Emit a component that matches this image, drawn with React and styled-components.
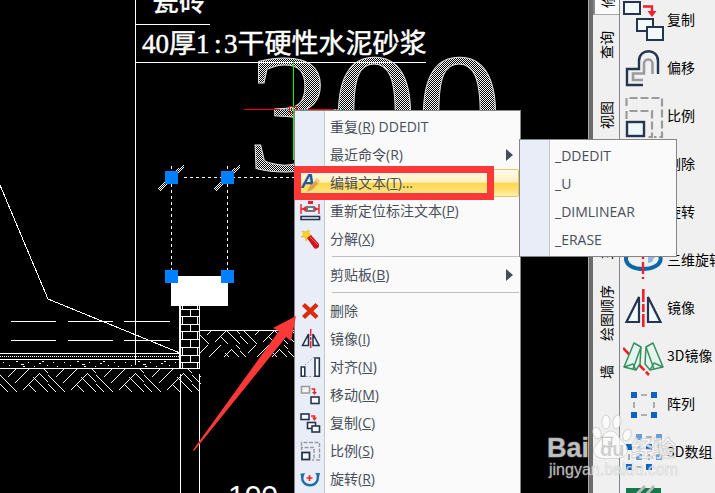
import React from "react";
import styled, { createGlobalStyle, css } from "styled-components";

const GlobalStyle = createGlobalStyle`
  * { box-sizing: border-box; }
  body { margin: 0; background: #000; }
`;

const uiFont = `"Open Sans", "Noto Sans CJK SC", sans-serif`;
const cjkFont = `"Noto Sans CJK SC", sans-serif`;

const Workspace = styled.div`
  position: relative;
  display: grid;
  grid-template-columns: minmax(0, 1fr) 5px 26px 96px;
  height: 100vh;
  overflow: hidden;
  font-family: ${uiFont};
`;

const Canvas = styled.main`
  overflow: hidden;
  background: #000;
`;

const Drawing = styled.svg`
  display: block;
  width: 100%;
  height: 100%;
`;

const Frame = styled.div`
  background: #6d6a6a;
  border-left: 1px solid #aaa;
`;

const TabStrip = styled.nav`
  display: grid;
  grid-template-rows: 15px 61px 78px 106px 106px 12px 128px;
  height: 100%;
  overflow: hidden;
  background: #f0f0f0;
`;

const Tab = styled.button`
  display: flex;
  align-items: center;
  justify-content: ${(p) => (p.$end ? "flex-start" : "center")};
  min-height: 0;
  padding: 0;
  border: 0;
  background: transparent;
  color: #000;
  font: 14px/18px ${cjkFont};
  writing-mode: vertical-rl;
  text-orientation: sideways;
  transform: rotate(180deg);
  ${(p) =>
    p.$active &&
    css`
      padding-top: 6px;
      justify-content: flex-start;
      background: #fafafa;
      border-right: 2px solid #888;
      border-top: 1px solid #aaa;
    `}
`;

const ToolPanel = styled.aside`
  height: 100%;
  overflow: hidden;
  border-left: 1px solid #80868c;
  background: #f0f0f0;
`;

const ToolList = styled.div`
  display: flex;
  flex-direction: column;
  margin-top: -4px;
`;

const Tool = styled.button`
  display: flex;
  flex: none;
  align-items: center;
  gap: 3px;
  height: 48px;
  padding: 0 0 0 3px;
  border: 0;
  background: transparent;
  color: #000;
  font: 14px/20px ${cjkFont};
  white-space: nowrap;
`;

const ToolLabel = styled.span`
  padding-bottom: 2px;
`;

const ToolGlyph = styled.svg`
  flex: none;
  width: 41px;
  height: 48px;
  fill: none;
`;

const Menu = styled.div`
  position: absolute;
  left: ${(p) => p.$x}px;
  top: ${(p) => p.$y}px;
  width: ${(p) => p.$width}px;
  padding: 2px 1px;
  border: 1px solid #858585;
  background: linear-gradient(90deg, #e9edf7 29px, #c4c5c7 29px, #c4c5c7 30px, #fafafa 30px);
`;

const MenuRow = styled.button`
  display: grid;
  grid-template-columns: 30px minmax(0, 1fr) 12px;
  align-items: center;
  width: 100%;
  height: 28px;
  padding: 0 0 0 3px;
  border: 1px solid transparent;
  background: transparent;
  color: #484e5a;
  font: 14px/20px ${uiFont};
  text-align: left;
  white-space: nowrap;
  ${(p) =>
    p.$active &&
    css`
      border-color: #e3c95f;
      border-radius: 2px;
      background: linear-gradient(#fffcee 0%, #fff0bd 47%, #ffd74e 50%, #ffdf6d 75%, #fff0b0 100%);
    `}
`;

const MenuGlyph = styled.svg`
  width: 21px;
  height: 20px;
  fill: none;
`;

const SubArrow = styled.svg`
  width: 7px;
  height: 12px;
  fill: #454c5a;
`;

const Separator = styled.div`
  height: 8px;
  padding: 3px 0 0 36px;
  &::after {
    content: "";
    display: block;
    height: 1px;
    background: #bfbfbf;
  }
`;

const RedFrame = styled.div`
  position: absolute;
  left: 294px;
  top: 166px;
  width: 200px;
  height: 34px;
  border: 7px solid #fc3838;
  pointer-events: none;
`;

const Pointer = styled.svg`
  position: absolute;
  left: 190px;
  top: 314px;
  width: 110px;
  height: 140px;
  fill: #fc3838;
  pointer-events: none;
`;

const Watermark = styled.svg`
  position: absolute;
  left: 544px;
  top: 410px;
  width: 140px;
  height: 76px;
  pointer-events: none;
`;

const NAVY = "#25344f";
const RED = "#f0202c";
const GRAY = "#999b9e";

const toolIcons = {
  copy: (
    <>
      <g fill="#f2fafd" stroke={NAVY} strokeWidth="2">
        <rect x="1" y="6" width="16" height="12" />
        <rect x="14" y="23" width="16" height="12" />
        <rect x="24" y="31" width="16" height="13" />
      </g>
      <path d="M20 10.5H29V15" stroke={RED} strokeWidth="2.4" />
      <path d="M24.5 15H33.5L29 21Z" fill={RED} />
    </>
  ),
  offset: (
    <>
      <path d="M20 41H4V25H16V17C16 4 35 4 35 17V30" stroke={NAVY} strokeWidth="2.4" />
      <path d="M20 36H10V29.5H21V20C21 14 29.5 14 29.5 20V30" stroke={GRAY} strokeWidth="2.6" />
    </>
  ),
  scale: (
    <>
      <path d="M3.5 14V6H39V45H31M3.5 27V19H29V45H24" stroke={GRAY} strokeWidth="2.2" strokeDasharray="8 3" />
      <rect x="4" y="30" width="17" height="14" fill="#edf8fb" stroke={NAVY} strokeWidth="2.4" />
    </>
  ),
  erase: <path d="M8 12L32 36M32 12L8 36" stroke={RED} strokeWidth="5" />,
  rotate: <path d="M6 14A17 17 0 1 0 34 14" stroke="#1b6fa5" strokeWidth="4" />,
  rotate3d: (
    <>
      <path d="M29 14C43 18 40 33 20 33C0 33 -2 17 12 14" stroke="#0b68a6" strokeWidth="4" />
      <path d="M25 27V20H34L31 22L29 26Z" fill="#8fbbe0" />
      <path d="M20 4V43" stroke={RED} strokeWidth="2.4" strokeDasharray="12 3 4 3" />
    </>
  ),
  mirror: (
    <>
      <path d="M16 13V38H3.5ZM25 13V38H37.5Z" fill="#f0fafc" stroke={NAVY} strokeWidth="2.2" />
      <path d="M20.3 5V44" stroke={RED} strokeWidth="2.6" strokeDasharray="13 2 8 2" />
    </>
  ),
  mirror3d: (
    <>
      <path d="M0 16L26 43" stroke={RED} strokeWidth="2.6" strokeDasharray="9 2" />
      <g fill="#e5f4ed" stroke="#35905c" strokeWidth="1.5" strokeLinejoin="round">
        <path d="M11 11L18 15L17 32L13 38L1 35Z" />
        <path d="M18 15L10 37M1 35L10 32L13 38" fill="none" />
        <path d="M30 11L23 15L22 32L27 38L40 35Z" />
        <path d="M23 15L31 37M40 35L31 31L27 38" fill="none" />
      </g>
    </>
  ),
  array: (
    <>
      <path d="M8 12h6v6h-6zM28 12h6v6h-6zM8 32h6v6h-6zM28 32h6v6h-6z" fill="#0d63bf" />
      <path d="M18 15H24M18 35H24M11 22V28M31 22V28" stroke={GRAY} strokeWidth="1.6" />
    </>
  ),
  array3d: (
    <>
      <path d="M13 6h6v6h-6zM33 6h6v6h-6zM13 26h6v6h-6zM33 26h6v6h-6z" fill="#669fda" />
      <path d="M3 16h6v6h-6zM23 16h6v6h-6zM3 36h6v6h-6zM23 36h6v6h-6z" fill="#0d63bf" />
      <path d="M23 9H29M13 19H19M13 39H19M6 26V32M26 26V32M36 16V22M22 29H30" stroke={GRAY} strokeWidth="1.6" />
    </>
  ),
  hatch: (
    <>
      <path d="M3 12H38V46H3Z" fill="#16794a" />
      <path d="M10 22L22 10M20 22L31 10" stroke="#b7bab9" strokeWidth="3" />
    </>
  ),
};

const menuIcons = {
  edit: (
    <>
      <text x="1" y="15" fill="#2557a0" fontFamily="Liberation Sans" fontSize="20" fontStyle="italic" fontWeight="700">A</text>
      <path d="M7 19L9 14L16 7L19 10L12 17Z" fill="#dda548" />
      <path d="M15 7L17 5L20 8L18 11Z" fill="#f0cb84" />
    </>
  ),
  dimension: (
    <>
      <path d="M8 0H13V3H8Z" fill={RED} />
      <path d="M1 3V13M19 3V13M1 8H19" stroke={RED} strokeWidth="1.4" />
      <path d="M2 8L6 5V11ZM18 8L14 5V11Z" fill={RED} />
      <rect x="7" y="6" width="7" height="4" fill="#eee" stroke="#777" strokeWidth="2" />
      <rect x="1" y="15.5" width="18.5" height="3" fill="#fff" stroke={NAVY} strokeWidth="1.6" />
    </>
  ),
  explode: (
    <>
      <path d="M2 2L6 3L9 1L9 5L12 7L8 9L6 12L5 8L1 8L4 5Z" fill="#ffd425" stroke="#e8b21b" strokeWidth=".7" />
      <path d="M7 9L11 6L19 15V18L16 20L14 19Z" fill="#cf171d" />
      <path d="M10 8L18 16" stroke="#f06a60" strokeWidth="1" />
    </>
  ),
  erase: <path d="M3.5 3.5L17 16.5M17 3.5L3.5 16.5" stroke="#da2b0b" strokeWidth="4.4" />,
  mirror: (
    <>
      <path d="M8.5 5V16.5H2.5ZM13 5V16.5H19Z" fill="#f0fafc" stroke={NAVY} strokeWidth="1.6" />
      <path d="M10.7 0V20" stroke={RED} strokeWidth="1.5" strokeDasharray="7 1 3 1" />
    </>
  ),
  align: (
    <>
      <path d="M1.2 10H4.8V19.2H1.2ZM15 1H19.3V19.2H15Z" fill="#fff" stroke={NAVY} strokeWidth="1.6" />
      <path d="M5 8L14 0M6 19.5H14" stroke="#858a92" strokeDasharray="1.5 2" />
    </>
  ),
  move: (
    <>
      <rect x="1.5" y="1.5" width="8" height="6.5" fill="#f4f4f4" stroke="#999" strokeWidth="1.5" />
      <rect x="11" y="12" width="8" height="6.5" fill="#f8fcff" stroke={NAVY} strokeWidth="1.6" />
      <path d="M11.5 4H14.5V7" stroke={RED} strokeWidth="1.5" />
      <path d="M12 7H17L14.5 10Z" fill={RED} />
    </>
  ),
  copy: (
    <>
      <g fill="#f8fcff" stroke={NAVY} strokeWidth="1.6">
        <rect x="1" y="1" width="8" height="5.5" />
        <rect x="7.5" y="9.5" width="8" height="6" />
        <rect x="12" y="13" width="7.5" height="6" />
      </g>
      <path d="M11 3H14.5V5" stroke={RED} strokeWidth="1.5" />
      <path d="M12 4.5H17L14.5 8Z" fill={RED} />
    </>
  ),
  scale: (
    <>
      <path d="M1.5 5V1.5H19.5V19H16M1.5 9V6.5H14V19H12" stroke={GRAY} strokeWidth="1.4" strokeDasharray="4 1.5" />
      <rect x="2" y="11.5" width="7.5" height="7" fill="#f8fcff" stroke={NAVY} strokeWidth="1.8" />
    </>
  ),
  rotate: (
    <>
      <path d="M2.5 5C-1 20 21 20 17.5 5" stroke="#1b6fa5" strokeWidth="2.4" />
      <path d="M0 5L5 4L3 9ZM15 4L20 4L19 8Z" fill="#1b6fa5" />
      <path d="M6.5 9H12.5M9.5 6V12" stroke={RED} strokeWidth="1.6" />
    </>
  ),
};

const tools = [
  ["copy", "复制"],
  ["offset", "偏移"],
  ["scale", "比例"],
  ["erase", "删除"],
  ["rotate", "旋转"],
  ["rotate3d", "三维旋转"],
  ["mirror", "镜像"],
  ["mirror3d", "3D镜像"],
  ["array", "阵列"],
  ["array3d", "3D数组"],
  ["hatch", ""],
];

const commands = [
  { label: "重复", accel: "R", tail: " DDEDIT" },
  { label: "最近命令(R)", sub: true },
  { label: "编辑文本", accel: "T", tail: "...", icon: "edit", active: true },
  { label: "重新定位标注文本", accel: "P", icon: "dimension" },
  { label: "分解", accel: "X", icon: "explode" },
  null,
  { label: "剪贴板", accel: "B", sub: true },
  null,
  { label: "删除", icon: "erase" },
  { label: "镜像", accel: "I", icon: "mirror" },
  { label: "对齐", accel: "N", icon: "align" },
  { label: "移动", accel: "M", icon: "move" },
  { label: "复制", accel: "C", icon: "copy" },
  { label: "比例", accel: "S", icon: "scale" },
  { label: "旋转", accel: "R", icon: "rotate" },
];

const recent = ["_DDEDIT", "_U", "_DIMLINEAR", "_ERASE"];

function MenuItem({ label, accel, tail, icon, sub, active }) {
  return (
    <MenuRow role="menuitem" $active={active} aria-haspopup={sub ? "menu" : undefined}>
      {icon ? <MenuGlyph viewBox="0 0 21 20" aria-hidden="true">{menuIcons[icon]}</MenuGlyph> : <span />}
      <span>
        {label}
        {accel && <>(<u>{accel}</u>)</>}
        {tail}
      </span>
      {sub && <SubArrow viewBox="0 0 7 12" aria-hidden="true"><path d="M0 0L7 6L0 12Z" /></SubArrow>}
    </MenuRow>
  );
}

function SectionDrawing() {
  return (
    <Drawing shapeRendering="crispEdges" aria-label="剖面图">
      <defs>
        <pattern id="mesh" width="4" height="4" patternUnits="userSpaceOnUse">
          <path d="M0 0h1v1h-1zM2 0h1v1h-1zM1 1h1v1h-1zM3 1h1v1h-1zM0 2h1v1h-1zM2 2h1v1h-1zM1 3h1v1h-1zM3 3h1v1h-1z" fill="#fff" />
        </pattern>
        <pattern id="earth" y="9" width="48" height="24" patternUnits="userSpaceOnUse">
          <path
            d="M0 6L17 23M0 15L8 23M23 21L40 4M15 14L29 0M8 8L16 0M33 8L48 23M28 15L36 23M40 5L48 13M44 0L48 4"
            fill="none" stroke="#fff" strokeWidth="1"
          />
        </pattern>
        <pattern id="gravel" width="61" height="8" patternUnits="userSpaceOnUse">
          <path d="M3 2h1M9 5h1M16 1h2M21 4h3M23 6h2M28 2h1M34 6h1M39 3h2M42 1h2M47 5h1M53 2h1M57 6h1" stroke="#fff" />
        </pattern>
      </defs>

      <g fill="none" stroke="#fff">
        <path d="M135.5 0V365M136 24.5H210M136 62.5H426" />
        <path d="M0 185L48 299L180 353" />
        <path d="M11 321.5H56M68 321.5H113M124 321.5H170M11 340.5H56M68 340.5H113M124 340.5H170" />
        <path d="M0 353.5H180M0 359.5H180M0 368.5H200M200 330.5H294" />
        <path d="M0 356.5H180" strokeDasharray="1 1" />
        <path d="M179.5 306V368M180.5 306V368M180.5 374V493M199.5 306V368M199.5 374V493" />
        <path d="M181 309.5H199M181 316.5H199M181 324.5H199M181 331.5H199M181 339.5H199M181 347.5H199M181 355.5H199M181 362.5H199" />
        <path d="M182.5 306V310M190.5 310V316M182.5 317V324M197.5 317V324M190.5 325V331M182.5 332V339M197.5 332V339M190.5 340V347M182.5 348V355M197.5 348V355M190.5 356V362M182.5 363V368M197.5 363V368M197.5 306V310" />
        <path d="M184 177.5H294M171.5 166V276M227.5 166V276" strokeDasharray="3 3" />
      </g>
      <path d="M159 190L184 166M215 190L240 166" stroke="url(#mesh)" strokeWidth="4" />
      <rect y="360" width="180" height="8" fill="url(#gravel)" />
      <rect y="369" width="201" height="23" fill="url(#earth)" />
      <rect x="200" y="331" width="94" height="26" fill="url(#earth)" />

      <rect x="171" y="276" width="57" height="30" fill="#fff" />
      <path d="M165 171h13v13h-13zM221 171h13v13h-13zM165 270h13v13h-13zM221 270h13v13h-13z" fill="#007fff" />

      <g fill="#fff" stroke="#fff" strokeWidth=".5" fontFamily='"Liberation Serif", "Noto Sans CJK SC", serif' fontSize="27">
        <text x="152" y="11">瓷砖</text>
        <text x="142" y="53">40厚1<tspan x="214">:</tspan><tspan x="224">3干硬性水泥砂浆</tspan></text>
      </g>
      <text x="228" y="506" fill="#fff" fontFamily="Liberation Sans" fontSize="30">100</text>
      <text x="247" y="170" fill="url(#mesh)" stroke="#ddd" strokeWidth="1" fontFamily="Liberation Serif" fontSize="170">300</text>

      <rect x="244" y="109" width="98" height="1" fill="#f00" />
      <rect x="293" y="61" width="1" height="99" fill="#0f0" />
      <path d="M280 109.5H308M334 109.5H344" stroke="#3dd" strokeDasharray="2 1" />
      <rect x="289.5" y="106.5" width="7" height="6" fill="none" stroke="#f00" />
    </Drawing>
  );
}

export default function App() {
  return (
    <>
      <GlobalStyle />
      <Workspace>
        <Canvas><SectionDrawing /></Canvas>
        <Frame />
        <TabStrip>
          <Tab $active>修</Tab>
          <Tab>查询</Tab>
          <Tab>视图</Tab>
          <Tab $end>三维</Tab>
          <Tab>绘图顺序</Tab>
          <Tab>墙</Tab>
          <Tab>口</Tab>
        </TabStrip>
        <ToolPanel>
          <ToolList>
            {tools.map(([icon, label]) => (
              <Tool key={icon} aria-label={label || "填充"}>
                <ToolGlyph viewBox="0 0 41 48" aria-hidden="true">{toolIcons[icon]}</ToolGlyph>
                <ToolLabel>{label}</ToolLabel>
              </Tool>
            ))}
          </ToolList>
        </ToolPanel>

        <Menu role="menu" $x={294} $y={110} $width={227}>
          {commands.map((c, i) => (c ? <MenuItem key={i} {...c} /> : <Separator key={i} role="separator" />))}
        </Menu>
        <Menu role="menu" $x={519} $y={139} $width={158}>
          {recent.map((label) => <MenuItem key={label} label={label} />)}
        </Menu>

        <RedFrame />
        <Pointer viewBox="0 0 110 140" aria-hidden="true">
          <path d="M106 2L83 14L89 17L3 136L4 137L96 23L101 27Z" />
        </Pointer>
        <Watermark viewBox="0 0 140 76" role="img" aria-label="Baidu 经验">
          <g
            fill="#fff" fillOpacity=".75" stroke="#b0b0b0" strokeOpacity=".5" strokeWidth="1"
            fontFamily='"Liberation Sans", "Noto Sans CJK SC", sans-serif'
          >
            <text x="3" y="47" fontSize="27" fontWeight="700">Bai</text>
            <ellipse cx="53" cy="23" rx="4" ry="6" transform="rotate(-20 53 23)" />
            <ellipse cx="62" cy="12" rx="4" ry="7" />
            <ellipse cx="73" cy="12" rx="4" ry="7" transform="rotate(10 73 12)" />
            <ellipse cx="83" cy="25" rx="4" ry="6" transform="rotate(20 83 25)" />
            <path d="M67 21C73 21 75 29 80 33C89 41 80 51 67 48C54 51 44 43 53 34C59 28 60 21 67 21Z" />
            <text x="87" y="46" fontSize="22" fontWeight="700">经验</text>
            <text x="5" y="65" fontSize="16" strokeOpacity=".35">jingyan.baidu.com</text>
          </g>
          <text x="56" y="46" fill="#cfcfcf" fontFamily="Liberation Sans" fontSize="20" fontWeight="700">du</text>
        </Watermark>
      </Workspace>
    </>
  );
}
